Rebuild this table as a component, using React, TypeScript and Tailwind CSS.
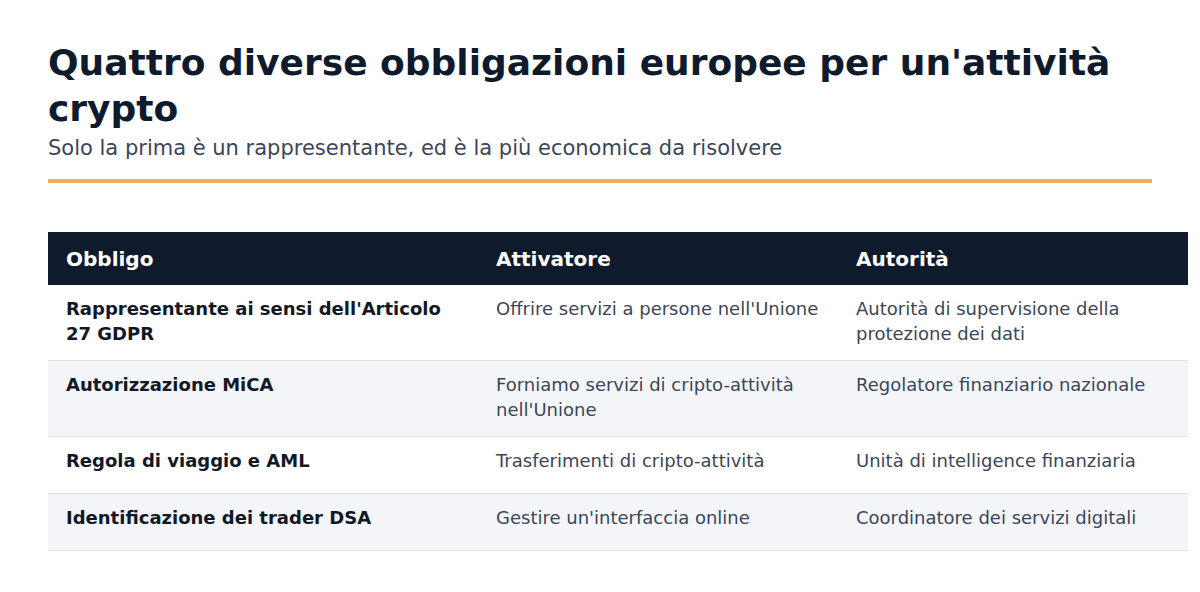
const rows = [
  {
    obbligo: "Rappresentante ai sensi dell'Articolo 27 GDPR",
    attivatore: "Offrire servizi a persone nell'Unione",
    autorita: 'Autorità di supervisione della protezione dei dati',
  },
  {
    obbligo: 'Autorizzazione MiCA',
    attivatore: "Forniamo servizi di cripto-attività nell'Unione",
    autorita: 'Regolatore finanziario nazionale',
  },
  {
    obbligo: 'Regola di viaggio e AML',
    attivatore: 'Trasferimenti di cripto-attività',
    autorita: 'Unità di intelligence finanziaria',
  },
  {
    obbligo: 'Identificazione dei trader DSA',
    attivatore: "Gestire un'interfaccia online",
    autorita: 'Coordinatore dei servizi digitali',
  },
]

export default function App() {
  return (
    <div className="w-[1200px] h-[592px] overflow-hidden bg-white font-['DejaVu_Sans',sans-serif]">
      <div className="pt-[40px] pl-[48px]">
        <div className="w-[1104px]">
          <h1 className="text-[36px] leading-[46px] font-bold text-[#0f1b2d]">
            Quattro diverse obbligazioni europee per un'attività crypto
          </h1>
          <p className="mt-[2px] text-[21px] leading-[28px] text-[#3b4659]">
            Solo la prima è un rappresentante, ed è la più economica da risolvere
          </p>
          <div className="mt-[17px] h-[4px] bg-[#e6b44c]" />
        </div>

        {/* tabella */}
        <div className="mt-[49px] w-[1140px]">
          <div className="grid grid-cols-[430px_360px_350px] h-[53px] items-center bg-[#0f1b2d] text-white text-[20px] font-bold">
            <div className="px-[18px]">Obbligo</div>
            <div className="px-[18px]">Attivatore</div>
            <div className="px-[18px]">Autorità</div>
          </div>
          {rows.map((r, i) => (
            <div
              key={i}
              className={`grid grid-cols-[430px_360px_350px] min-h-[57px] border-b border-[#dde1e8] text-[18px] leading-[25px] ${i % 2 === 1 ? 'bg-[#f3f5f9]' : 'bg-white'}`}
            >
              <div className="px-[18px] pt-[11px] pb-[14px] font-bold text-[#111827]">{r.obbligo}</div>
              <div className="px-[18px] pt-[11px] pb-[14px] text-[#3b4659]">{r.attivatore}</div>
              <div className="px-[18px] pt-[11px] pb-[14px] text-[#3b4659]">{r.autorita}</div>
            </div>
          ))}
        </div>
      </div>
    </div>
  )
}
